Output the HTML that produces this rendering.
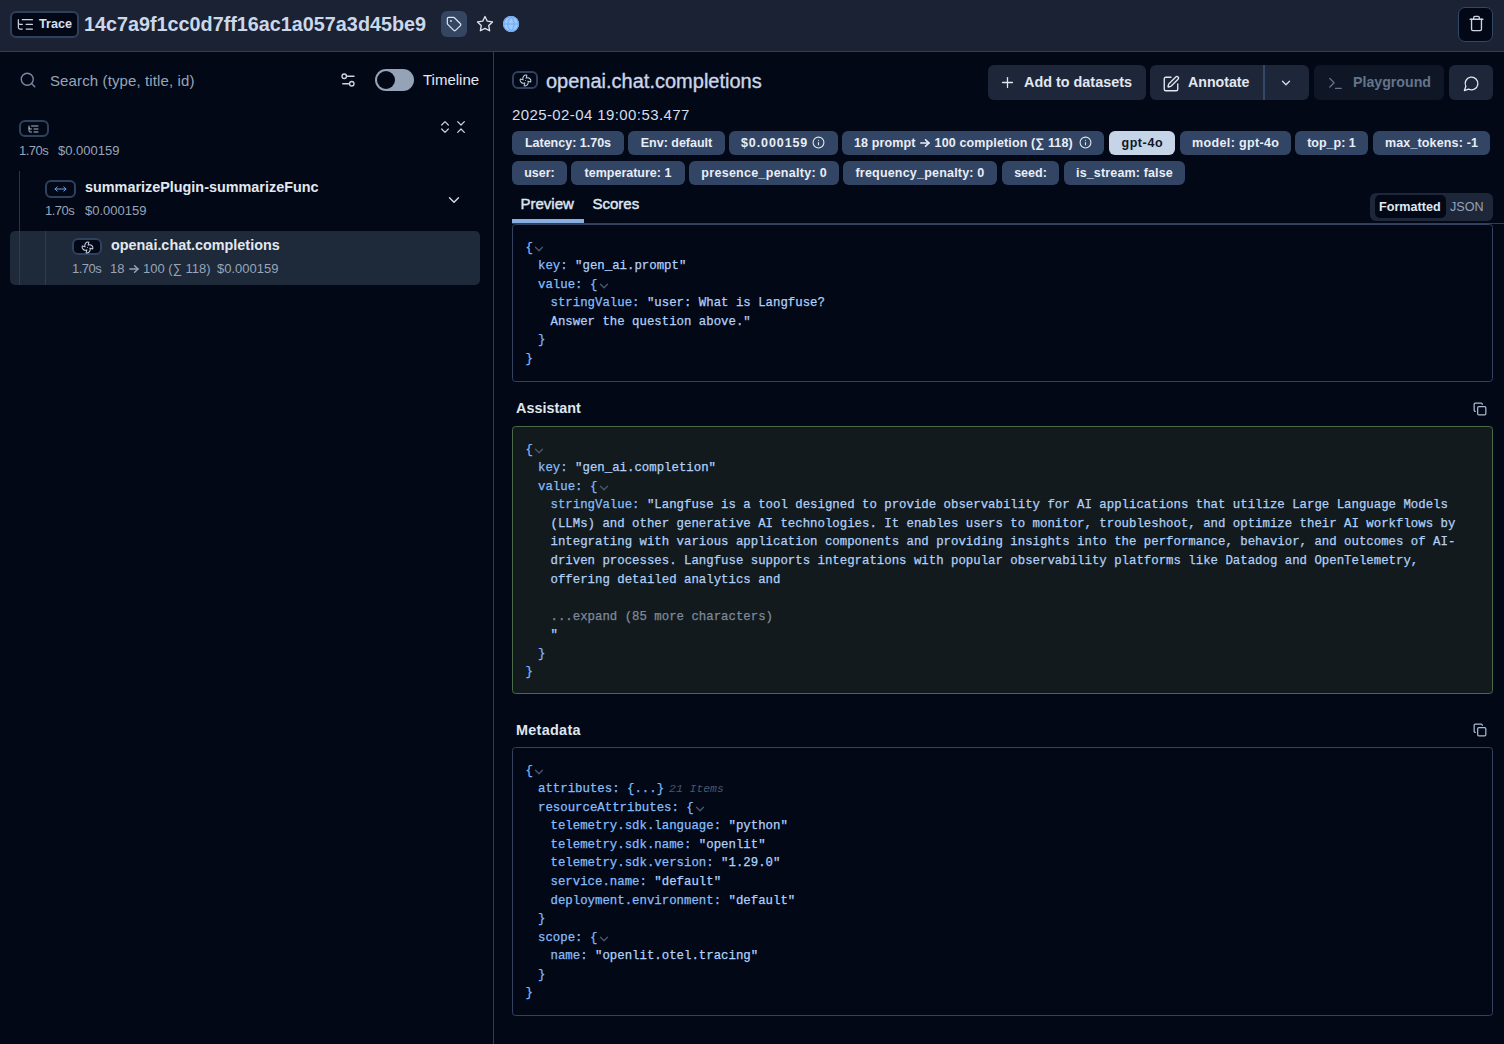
<!DOCTYPE html>
<html><head><meta charset="utf-8">
<style>
*{box-sizing:border-box;margin:0;padding:0}
html,body{width:1504px;height:1044px;overflow:hidden;background:#030817;font-family:"Liberation Sans",sans-serif;color:#e2e8f0}
.a{position:absolute}
.t{position:absolute;white-space:pre;line-height:1}
svg.i{position:absolute;fill:none;stroke:currentColor;stroke-width:2;stroke-linecap:round;stroke-linejoin:round}
.badge{position:absolute;height:24px;border-radius:6px;background:#334564;color:#e8eef7;font-weight:bold;font-size:12.5px;line-height:24px;text-align:center;white-space:pre}
.btn{position:absolute;top:65px;height:35px;border-radius:6px;background:#1e2739}
.mono{-webkit-text-stroke:0.25px currentColor;font-family:"Liberation Mono",monospace;font-size:12.37px;line-height:18.58px;white-space:normal;position:absolute;color:#b9d7fb}
.k{color:#86bdf8}
.b{color:#7fb6f6}
.s{color:#b0d0f8}
.cw{position:relative;display:inline-block;width:10px;height:0}.cvs{fill:none;stroke:#4a586d;stroke-width:2.2;stroke-linecap:round;stroke-linejoin:round;position:absolute;left:-0.5px;top:-8.6px}
.muted{color:#97a5b9}
.mono div{white-space:pre;height:18.58px}
.L0{padding-left:0}.L1{padding-left:12.5px}.L2{padding-left:25px}
</style></head><body>

<!-- HEADER -->
<div class="a" style="left:0;top:0;width:1504px;height:51px;background:#1b2234"></div>
<div class="a" style="left:0;top:51px;width:1504px;height:1px;background:#2f3d57"></div>

<div class="a" style="left:10px;top:11px;width:69px;height:27px;border:2px solid #2f405d;border-radius:6px;background:#030817"></div>
<svg class="i" style="left:15.8px;top:14.6px;color:#cbd5e1;stroke-width:1.5" width="18.8" height="18.8" viewBox="0 0 24 24"><path d="M21 12h-8"/><path d="M21 6H8"/><path d="M21 18h-8"/><path d="M3 6v4c0 1.1.9 2 2 2h3"/><path d="M3 10v6c0 1.1.9 2 2 2h3"/></svg>
<div class="t" style="left:39px;top:18px;font-size:12.6px;font-weight:bold;color:#d6e0ee">Trace</div>
<div class="t" style="left:84px;top:15px;font-size:19.8px;font-weight:bold;color:#cbd8ea">14c7a9f1cc0d7ff16ac1a057a3d45be9</div>

<div class="a" style="left:441px;top:11px;width:26px;height:26px;border-radius:6px;background:#344662"></div>
<svg class="i" style="left:446px;top:16px;color:#dfe6f0;stroke-width:1.8" width="16" height="16" viewBox="0 0 24 24"><path d="M12.586 2.586A2 2 0 0 0 11.172 2H4a2 2 0 0 0-2 2v7.172a2 2 0 0 0 .586 1.414l8.704 8.704a2.426 2.426 0 0 0 3.42 0l6.58-6.58a2.426 2.426 0 0 0 0-3.42z"/><circle cx="7.5" cy="7.5" r=".5" fill="currentColor"/></svg>
<svg class="i" style="left:476px;top:15px;color:#dfe6f0;stroke-width:1.8" width="18" height="18" viewBox="0 0 24 24"><polygon points="12 2 15.09 8.26 22 9.27 17 14.14 18.18 21.02 12 17.77 5.82 21.02 7 14.14 2 9.27 8.91 8.26 12 2"/></svg>
<svg class="a" style="left:502.7px;top:15.5px" width="16" height="16" viewBox="0 0 16 16"><circle cx="8" cy="8" r="8" fill="#9fcbfc"/><g fill="none" stroke="#74adf7" stroke-width="1.3"><circle cx="8" cy="8" r="7.3"/><path d="M8 0.7a10 10 0 0 0 0 14.6 10 10 0 0 0 0-14.6"/><path d="M0.7 8h14.6"/></g></svg>

<div class="a" style="left:1458px;top:7px;width:35px;height:35px;border:1px solid #344766;border-radius:7px;background:#030817"></div>
<svg class="i" style="left:1467.5px;top:15px;color:#cbd5e1;stroke-width:1.9" width="17" height="17" viewBox="0 0 24 24"><path d="M3 6h18"/><path d="M19 6v14c0 1-1 2-2 2H7c-1 0-2-1-2-2V6"/><path d="M8 6V4c0-1 1-2 2-2h4c1 0 2 1 2 2v2"/></svg>

<!-- LEFT PANEL -->
<div class="a" style="left:493px;top:52px;width:1px;height:992px;background:#2e3c56"></div>

<svg class="i" style="left:19px;top:71px;color:#7a8ba5;stroke-width:1.8" width="18" height="18" viewBox="0 0 24 24"><circle cx="11" cy="11" r="8"/><path d="m21 21-4.3-4.3"/></svg>
<div class="t" style="left:50px;top:73px;font-size:15px;color:#97a5b9;letter-spacing:0.12px">Search (type, title, id)</div>
<svg class="i" style="left:339px;top:71px;color:#cbd5e1;stroke-width:1.8" width="18" height="18" viewBox="0 0 24 24"><path d="M20 7h-9"/><path d="M14 17H5"/><circle cx="17" cy="17" r="3"/><circle cx="7" cy="7" r="3"/></svg>
<div class="a" style="left:375px;top:69px;width:39px;height:22px;border-radius:11px;background:#94a3b8"></div>
<div class="a" style="left:377px;top:71px;width:18px;height:18px;border-radius:9px;background:#030817"></div>
<div class="t" style="left:423px;top:72px;font-size:15px;color:#e2e8f0">Timeline</div>

<div class="a" style="left:19px;top:120px;width:30px;height:17px;border:2px solid #30415e;border-radius:6px"></div>
<svg class="i" style="left:27px;top:123px;color:#c3cfdf;stroke-width:1.8" width="13" height="12" viewBox="0 0 24 24"><path d="M21 12h-8"/><path d="M21 6H8"/><path d="M21 18h-8"/><path d="M3 6v4c0 1.1.9 2 2 2h3"/><path d="M3 10v6c0 1.1.9 2 2 2h3"/></svg>
<div class="t muted" style="left:19px;top:144px;font-size:13px;letter-spacing:-0.5px">1.70s</div>
<div class="t muted" style="left:58px;top:144px;font-size:13px">$0.000159</div>
<svg class="i" style="left:437px;top:119px;color:#cbd5e1;stroke-width:1.8" width="16" height="16" viewBox="0 0 24 24"><path d="m7 15 5 5 5-5"/><path d="m7 9 5-5 5 5"/></svg>
<svg class="i" style="left:453px;top:119px;color:#cbd5e1;stroke-width:1.8" width="16" height="16" viewBox="0 0 24 24"><path d="m7 20 5-5 5 5"/><path d="m7 4 5 5 5-5"/></svg>

<div class="a" style="left:19px;top:171px;width:1px;height:114px;background:#27344a"></div>
<div class="a" style="left:45px;top:180px;width:31px;height:18px;border:2px solid #30415e;border-radius:6px"></div>
<svg class="i" style="left:54px;top:182px;color:#6cb0fb;stroke-width:1.7" width="13" height="14" viewBox="0 0 24 24"><path d="m18 8 4 4-4 4"/><path d="M2 12h20"/><path d="m6 8-4 4 4 4"/></svg>
<div class="t" style="left:85px;top:180px;font-size:14.4px;font-weight:bold;color:#e2e8f0">summarizePlugin-summarizeFunc</div>
<div class="t muted" style="left:45px;top:204px;font-size:13px;letter-spacing:-0.5px">1.70s</div>
<div class="t muted" style="left:85px;top:204px;font-size:13px">$0.000159</div>
<svg class="i" style="left:445px;top:191px;color:#d5dfec;stroke-width:1.8" width="18" height="18" viewBox="0 0 24 24"><path d="m6 9 6 6 6-6"/></svg>

<div class="a" style="left:10px;top:231px;width:470px;height:54px;border-radius:5px;background:#1e2939"></div>
<div class="a" style="left:19px;top:231px;width:1px;height:54px;background:#2d3b54"></div>
<div class="a" style="left:45px;top:231px;width:1px;height:54px;background:#2d3b54"></div>
<div class="a" style="left:72px;top:238px;width:30px;height:17px;border:2px solid #30415e;border-radius:6px;background:#030817"></div>
<svg class="i" style="left:80.5px;top:240.5px;color:#c3cfdf;stroke-width:1.9" width="13" height="13" viewBox="0 0 24 24"><path d="M10.827 16.379a6.082 6.082 0 0 1-8.618-7.002l5.412 1.45a6.082 6.082 0 0 1 7.002-8.618l-1.45 5.412a6.082 6.082 0 0 1 8.618 7.002l-5.412-1.45a6.082 6.082 0 0 1-7.002 8.618l1.45-5.412Z"/><path d="M12 12v.01"/></svg>
<div class="t" style="left:111px;top:238px;font-size:14.4px;font-weight:bold;color:#e2e8f0">openai.chat.completions</div>
<div class="t muted" style="left:72px;top:262px;font-size:13px;letter-spacing:-0.5px">1.70s</div>
<div class="t muted" style="left:110px;top:262px;font-size:13px">18</div>
<svg class="i" style="left:128.5px;top:264.5px;color:#97a5b9;stroke-width:1.5" width="10" height="8" viewBox="0 0 10 8"><path d="M0.8 4h8.2"/><path d="M5.6 0.8 9 4 5.6 7.2"/></svg>
<div class="t muted" style="left:143px;top:262px;font-size:13px">100 (∑ 118)</div>
<div class="t muted" style="left:217px;top:262px;font-size:13px">$0.000159</div>

<!-- RIGHT PANEL -->
<div class="a" style="left:512px;top:71px;width:26px;height:18px;border:2px solid #30415e;border-radius:6px"></div>
<svg class="i" style="left:518.5px;top:74px;color:#c3cfdf;stroke-width:1.9" width="13" height="13" viewBox="0 0 24 24"><path d="M10.827 16.379a6.082 6.082 0 0 1-8.618-7.002l5.412 1.45a6.082 6.082 0 0 1 7.002-8.618l-1.45 5.412a6.082 6.082 0 0 1 8.618 7.002l-5.412-1.45a6.082 6.082 0 0 1-7.002 8.618l1.45-5.412Z"/><path d="M12 12v.01"/></svg>
<div class="t" style="left:546px;top:71px;font-size:20px;color:#cad6e7;-webkit-text-stroke:0.35px #cad6e7">openai.chat.completions</div>

<div class="btn" style="left:988px;width:158px"></div>
<svg class="i" style="left:999px;top:74px;color:#e2e8f0;stroke-width:1.8" width="17" height="17" viewBox="0 0 24 24"><path d="M5 12h14"/><path d="M12 5v14"/></svg>
<div class="t" style="left:1024px;top:75px;font-size:14.4px;font-weight:bold;color:#e2e8f0">Add to datasets</div>
<div class="btn" style="left:1150px;width:159px"></div>
<div class="a" style="left:1263px;top:65px;width:1.5px;height:35px;background:#334766"></div>
<svg class="i" style="left:1162px;top:75px;color:#e2e8f0;stroke-width:1.8" width="18" height="18" viewBox="0 0 24 24"><path d="M12 3H5a2 2 0 0 0-2 2v14a2 2 0 0 0 2 2h14a2 2 0 0 0 2-2v-7"/><path d="M18.375 2.625a1 1 0 0 1 3 3l-9.013 9.014a2 2 0 0 1-.853.505l-2.873.84a.5.5 0 0 1-.62-.62l.84-2.873a2 2 0 0 1 .506-.852z"/></svg>
<div class="t" style="left:1188px;top:75px;font-size:14.2px;font-weight:bold;color:#e2e8f0">Annotate</div>
<svg class="i" style="left:1279px;top:75.5px;color:#d5dfec;stroke-width:2.2" width="14" height="14" viewBox="0 0 24 24"><path d="m6 9 6 6 6-6"/></svg>
<div class="btn" style="left:1314px;width:130px;background:#0f1726"></div>
<svg class="i" style="left:1327px;top:75px;color:#64748b;stroke-width:1.8" width="17" height="17" viewBox="0 0 24 24"><polyline points="4 17 10 11 4 5"/><line x1="12" x2="20" y1="19" y2="19"/></svg>
<div class="t" style="left:1353px;top:75px;font-size:14.2px;font-weight:bold;color:#64748b">Playground</div>
<div class="btn" style="left:1449px;width:44px"></div>
<svg class="i" style="left:1462.5px;top:74.5px;color:#e2e8f0;stroke-width:1.9" width="17" height="17" viewBox="0 0 24 24"><path d="M7.9 20A9 9 0 1 0 4 16.1L2 22Z"/></svg>

<div class="t" style="left:512px;top:107px;font-size:15px;color:#d3deec;letter-spacing:0.4px">2025-02-04 19:00:53.477</div>

<div class="badge" style="left:512px;top:131px;width:112px">Latency: 1.70s</div>
<div class="badge" style="left:628px;top:131px;width:97px">Env: default</div>
<div class="badge" style="left:729px;top:131px;width:109px;text-align:left;padding-left:12px;letter-spacing:0.9px">$0.000159</div>
<svg class="i" style="left:812px;top:136px;color:#e2e8f0;stroke-width:2" width="13" height="13" viewBox="0 0 24 24"><circle cx="12" cy="12" r="10"/><path d="M12 16v-4"/><path d="M12 8h.01"/></svg>
<div class="badge" style="left:842px;top:131px;width:262px;text-align:left;padding-left:12px;letter-spacing:0.13px">18 prompt<svg style="display:inline-block;vertical-align:baseline;margin:0 4.5px 0 4.5px;fill:none;stroke:#e8eef7;stroke-width:1.6;stroke-linecap:round;stroke-linejoin:round;position:relative;top:0px" width="10" height="8" viewBox="0 0 10 8"><path d="M0.8 4h8.2"/><path d="M5.6 0.8 9 4 5.6 7.2"/></svg>100 completion (∑ 118)</div>
<svg class="i" style="left:1079px;top:136px;color:#e2e8f0;stroke-width:2" width="13" height="13" viewBox="0 0 24 24"><circle cx="12" cy="12" r="10"/><path d="M12 16v-4"/><path d="M12 8h.01"/></svg>
<div class="badge" style="left:1109px;top:131px;width:66px;background:#c5d4e6;color:#0f172a;letter-spacing:0.6px;text-indent:0.6px">gpt-4o</div>
<div class="badge" style="left:1180px;top:131px;width:111px;letter-spacing:0.35px;text-indent:0.35px">model: gpt-4o</div>
<div class="badge" style="left:1295px;top:131px;width:73px">top_p: 1</div>
<div class="badge" style="left:1373px;top:131px;width:117px;letter-spacing:0.15px">max_tokens: -1</div>

<div class="badge" style="left:512px;top:160.5px;width:55px">user:</div>
<div class="badge" style="left:571px;top:160.5px;width:114px">temperature: 1</div>
<div class="badge" style="left:689px;top:160.5px;width:150px;letter-spacing:0.28px;text-indent:0.28px">presence_penalty: 0</div>
<div class="badge" style="left:843px;top:160.5px;width:154px;letter-spacing:0.2px">frequency_penalty: 0</div>
<div class="badge" style="left:1002px;top:160.5px;width:57px">seed:</div>
<div class="badge" style="left:1064px;top:160.5px;width:121px;letter-spacing:0.15px">is_stream: false</div>

<div class="t" style="left:520.5px;top:195.7px;font-size:15px;color:#dfe6f0;-webkit-text-stroke:0.45px #dfe6f0">Preview</div>
<div class="t" style="left:592.5px;top:195.7px;font-size:15px;color:#dfe6f0;-webkit-text-stroke:0.45px #dfe6f0">Scores</div>
<div class="a" style="left:512px;top:223px;width:992px;height:1px;background:#2f3d57"></div>
<div class="a" style="left:512px;top:219px;width:72px;height:4px;background:#89aee2"></div>

<div class="a" style="left:1370px;top:193px;width:123px;height:28px;border-radius:6px;background:#1e2739"></div>
<div class="a" style="left:1375px;top:195px;width:71px;height:23px;border-radius:5px;background:#030817"></div>
<div class="t" style="left:1379px;top:201px;font-size:12.6px;font-weight:bold;color:#e2e8f0">Formatted</div>
<div class="t" style="left:1450px;top:201px;font-size:12.6px;color:#94a3b8">JSON</div>

<!-- BOX 1 -->
<div class="a" style="left:512px;top:224px;width:981px;height:158px;border:1px solid #33425e;border-radius:3.5px"></div>
<div class="mono" style="left:525.5px;top:238.5px">
<div class="L0"><span class="b">{</span><span class="cw"><svg class="cvs" width="14" height="14" viewBox="0 0 24 24"><path d="m6 9 6 6 6-6"/></svg></span></div>
<div class="L1"><span class="k">key:</span> <span class="s">"gen_ai.prompt"</span></div>
<div class="L1"><span class="k">value:</span> <span class="b">{</span><span class="cw"><svg class="cvs" width="14" height="14" viewBox="0 0 24 24"><path d="m6 9 6 6 6-6"/></svg></span></div>
<div class="L2"><span class="k">stringValue:</span> <span class="s">"user: What is Langfuse?</span></div>
<div class="L2"><span class="s">Answer the question above."</span></div>
<div class="L1"><span class="b">}</span></div>
<div class="L0"><span class="b">}</span></div></div>

<!-- ASSISTANT -->
<div class="t" style="left:516px;top:401px;font-size:14.4px;font-weight:bold;color:#dfe6f0">Assistant</div>
<svg class="i" style="left:1472.5px;top:401.5px;color:#a9bcd6;stroke-width:2.1" width="14" height="14" viewBox="0 0 24 24"><rect width="14" height="14" x="8" y="8" rx="2" ry="2"/><path d="M4 16c-1.1 0-2-.9-2-2V4c0-1.1.9-2 2-2h10c1.1 0 2 .9 2 2"/></svg>
<div class="a" style="left:512px;top:426px;width:981px;height:268px;border:1px solid #4a6b45;border-radius:3.5px;background:#131a1d"></div>
<div class="mono" style="left:525.5px;top:440.5px">
<div class="L0"><span class="b">{</span><span class="cw"><svg class="cvs" width="14" height="14" viewBox="0 0 24 24"><path d="m6 9 6 6 6-6"/></svg></span></div>
<div class="L1"><span class="k">key:</span> <span class="s">"gen_ai.completion"</span></div>
<div class="L1"><span class="k">value:</span> <span class="b">{</span><span class="cw"><svg class="cvs" width="14" height="14" viewBox="0 0 24 24"><path d="m6 9 6 6 6-6"/></svg></span></div>
<div class="L2"><span class="k">stringValue:</span> <span class="s">"Langfuse is a tool designed to provide observability for AI applications that utilize Large Language Models</span></div>
<div class="L2"><span class="s">(LLMs) and other generative AI technologies. It enables users to monitor, troubleshoot, and optimize their AI workflows by</span></div>
<div class="L2"><span class="s">integrating with various application components and providing insights into the performance, behavior, and outcomes of AI-</span></div>
<div class="L2"><span class="s">driven processes. Langfuse supports integrations with popular observability platforms like Datadog and OpenTelemetry,</span></div>
<div class="L2"><span class="s">offering detailed analytics and</span></div>
<div class="L0">&#8203;</div>
<div class="L2"><span style="color:#7d8a9c">...expand (85 more characters)</span></div>
<div class="L2"><span class="s">"</span></div>
<div class="L1"><span class="b">}</span></div>
<div class="L0"><span class="b">}</span></div></div>

<!-- METADATA -->
<div class="t" style="left:516px;top:723px;font-size:14.4px;font-weight:bold;color:#dfe6f0;letter-spacing:0.3px">Metadata</div>
<svg class="i" style="left:1472.5px;top:722.5px;color:#a9bcd6;stroke-width:2.1" width="14" height="14" viewBox="0 0 24 24"><rect width="14" height="14" x="8" y="8" rx="2" ry="2"/><path d="M4 16c-1.1 0-2-.9-2-2V4c0-1.1.9-2 2-2h10c1.1 0 2 .9 2 2"/></svg>
<div class="a" style="left:512px;top:747px;width:981px;height:269px;border:1px solid #33425e;border-radius:3.5px"></div>
<div class="mono" style="left:525.5px;top:761.5px">
<div class="L0"><span class="b">{</span><span class="cw"><svg class="cvs" width="14" height="14" viewBox="0 0 24 24"><path d="m6 9 6 6 6-6"/></svg></span></div>
<div class="L1"><span class="k">attributes:</span> <span class="b">{...}</span><span style="color:#4a586d;font-style:italic;font-size:11.4px;margin-left:5px;-webkit-text-stroke:0">21 Items</span></div>
<div class="L1"><span class="k">resourceAttributes:</span> <span class="b">{</span><span class="cw"><svg class="cvs" width="14" height="14" viewBox="0 0 24 24"><path d="m6 9 6 6 6-6"/></svg></span></div>
<div class="L2"><span class="k">telemetry.sdk.language:</span> <span class="s">"python"</span></div>
<div class="L2"><span class="k">telemetry.sdk.name:</span> <span class="s">"openlit"</span></div>
<div class="L2"><span class="k">telemetry.sdk.version:</span> <span class="s">"1.29.0"</span></div>
<div class="L2"><span class="k">service.name:</span> <span class="s">"default"</span></div>
<div class="L2"><span class="k">deployment.environment:</span> <span class="s">"default"</span></div>
<div class="L1"><span class="b">}</span></div>
<div class="L1"><span class="k">scope:</span> <span class="b">{</span><span class="cw"><svg class="cvs" width="14" height="14" viewBox="0 0 24 24"><path d="m6 9 6 6 6-6"/></svg></span></div>
<div class="L2"><span class="k">name:</span> <span class="s">"openlit.otel.tracing"</span></div>
<div class="L1"><span class="b">}</span></div>
<div class="L0"><span class="b">}</span></div></div>

</body></html>
